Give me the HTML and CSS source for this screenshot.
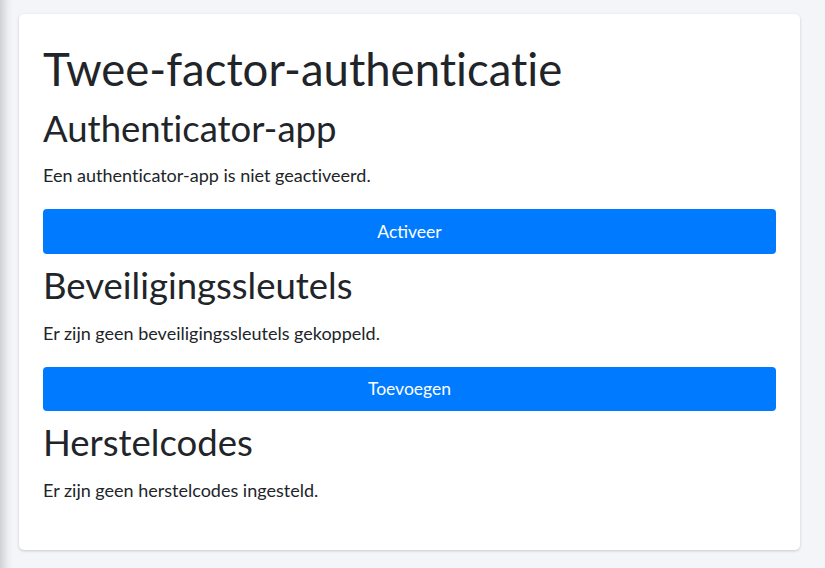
FILE: index.html
```html
<!DOCTYPE html>
<html lang="nl">
<head>
  <meta charset="UTF-8">
  <meta name="viewport" content="width=device-width, initial-scale=1.0">
  <title>Twee-factor-authenticatie</title>
  <link rel="stylesheet" href="styles.css">
</head>
<body>
  <div class="page">
    <div class="card">
      <h1>Twee-factor-authenticatie</h1>

      <h2>Authenticator-app</h2>
      <p>Een authenticator-app is niet geactiveerd.</p>
      <button class="btn">Activeer</button>

      <h2>Beveiligingssleutels</h2>
      <p>Er zijn geen beveiligingssleutels gekoppeld.</p>
      <button class="btn">Toevoegen</button>

      <h2>Herstelcodes</h2>
      <p>Er zijn geen herstelcodes ingesteld.</p>
    </div>
  </div>
</body>
</html>
```

FILE: styles.css
```css
html, body { margin: 0; height: 100%; }
body { background: #f4f5f9; font-family: Lato, "Open Sans", sans-serif; color: #212529; font-variant-ligatures: none; }
.page { min-height: 100%; padding: 14px 25px 18px 19px; box-sizing: border-box; box-shadow: inset 12px 0 10px -8px rgba(0,0,0,.18); }
.card { background: #fff; border-radius: 5px; box-shadow: 0 1px 3px rgba(0,0,0,.18); padding: 28px 24px 26px; }
h1 { font-weight: 400; font-size: 45.5px; line-height: 1.2; margin: 0 0 10px; }
h2 { font-weight: 400; font-size: 36.5px; line-height: 1.2; margin: 0 0 12px; }
p { font-size: 18px; line-height: 1.5; margin: 0 0 20px; }
.btn { display: block; width: 100%; height: 44.5px; border: none; border-radius: 4px; background: #007bff; color: #fff; font-family: inherit; font-size: 17.5px; margin-bottom: 10px; cursor: pointer; }
```
